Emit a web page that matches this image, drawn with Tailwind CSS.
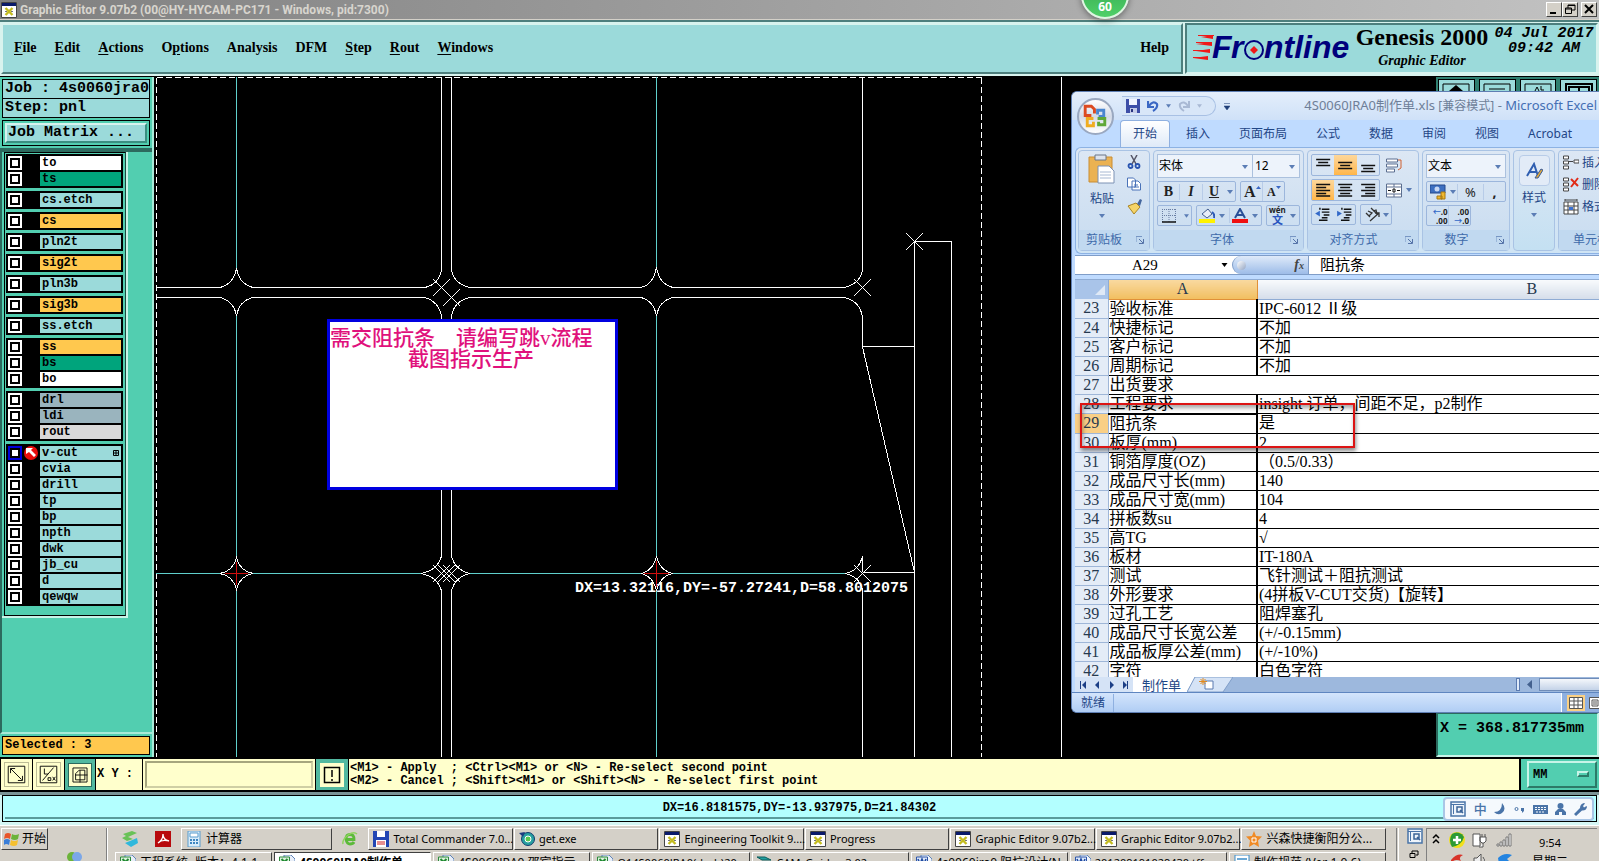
<!DOCTYPE html>
<html lang="zh-CN">

<head>
    <meta charset="UTF-8">
    <meta name="viewport" content="width=device-width, initial-scale=1.0">
    <script src="https://cdn.jsdelivr.net/npm/@tailwindcss/browser@4"></script>
    <title>Graphic Editor 9.07b2</title>
</head>

<body class="h-screen flex flex-col overflow-hidden bg-black text-black font-[family-name:'Noto_Sans','Noto_Sans_CJK_SC',sans-serif]">

    <!-- shared icons -->
    <svg class="hidden">
        <symbol id="xwin" viewBox="0 0 16 16">
            <path d="M.5 .5h15v15H.5z" fill="#fff" stroke="#444" />
            <path d="M1 1h14v3H1z" fill="#0a1a6a" />
            <path d="M4.500 6l7 7M11.500 6l-7 7" stroke="#c4bc20" stroke-width="2.400" />
            <path d="M4 9.500h2M10 9.500h2" stroke="#777" />
        </symbol>
        <symbol id="down" viewBox="0 0 6 4">
            <path d="M0 0h6L3 4z" fill="currentColor" />
        </symbol>
        <symbol id="launch" viewBox="0 0 8 8">
            <path d="M0 6V.5h6" fill="none" stroke="#7796c4" />
            <path d="M3 3l4 4M7.500 3v4.500H3" fill="none" stroke="#5573a8" />
        </symbol>
        <symbol id="xls" viewBox="0 0 16 16">
            <path d="M5 0h7l4 4v12H5z" fill="#e8eef8" stroke="#5f84b8" />
            <path d="M.5 2h10v10H.5z" fill="#dff3df" stroke="#2d8a3c" />
            <path d="M2.500 4l6 6M8.500 4l-6 6" stroke="#218a32" stroke-width="2" />
        </symbol>
        <symbol id="doc" viewBox="0 0 16 16">
            <path d="M5 0h7l4 4v12H5z" fill="#f2f6fd" stroke="#5f84b8" />
            <path d="M.5 2h11v9H.5z" fill="#dce8fa" stroke="#2d55a8" />
            <path d="M2 4l2 5 2-5 2 5 2-5" fill="none" stroke="#1f4aa0" stroke-width="1.500" />
        </symbol>
        <symbol id="ime" viewBox="0 0 16 16">
            <path d="M1 1h14v14H1z" fill="#eef4fb" stroke="#4a74a8" stroke-width="1.500" />
            <path d="M3.500 3v10M1 3.500h13" fill="none" stroke="#4a74a8" />
            <path d="M7 6h5v5H7zM10 9l3 3" fill="none" stroke="#3c6498" stroke-width="1.500" />
        </symbol>
    </svg>

    <!-- title bar -->
    <div class="h-5 shrink-0 flex items-center px-[1px] bg-linear-to-r from-[#808080] to-[#c2c2c2] border-b border-[#d4d0c8]">
        <svg class="size-4"><use href="#xwin" /></svg>
        <h1 class="ml-[3px] flex-1 text-[12px] leading-4 font-bold text-[#d8d5ce] whitespace-nowrap font-[family-name:Roboto,sans-serif]">Graphic Editor 9.07b2 (00@HY-HYCAM-PC171 - Windows, pid:7300)</h1>
        <div class="flex h-[15px] pr-[1px]">
            <button aria-label="最小化" class="w-4 bg-[#d4d0c8] border border-t-white border-l-white border-r-[#404040] border-b-[#404040]"><svg viewBox="0 0 14 13"><path d="M3 10h6" stroke="#000" stroke-width="2" /></svg></button>
            <button aria-label="还原" class="w-4 bg-[#d4d0c8] border border-t-white border-l-white border-r-[#404040] border-b-[#404040]"><svg viewBox="0 0 14 13" fill="none" stroke="#000"><path d="M5 5V2h7v5H9M5 2.500h7M2.500 5h6v5.500h-6zM2.500 6h6" /></svg></button>
            <button aria-label="关闭" class="ml-[3px] w-4 bg-[#d4d0c8] border border-t-white border-l-white border-r-[#404040] border-b-[#404040]"><svg viewBox="0 0 14 13"><path d="M3 2l8 8M11 2l-8 8" stroke="#000" stroke-width="2" /></svg></button>
        </div>
    </div>

    <!-- menu and product logo -->
    <header class="h-[57px] shrink-0 flex bg-[#d8f3ee] border-t-2 border-b border-t-[#4d7f7d] border-b-black font-[family-name:'Liberation_Serif',serif] font-bold">
        <nav class="flex-1 m-px mb-[2px] flex items-center gap-[18px] pl-[11px] pr-[12px] pb-[2px] bg-[#9bdada] border-2 border-t-[#d8f3ee] border-l-[#d8f3ee] border-r-[#4d7f7d] border-b-[#4d7f7d] text-[14px]">
            <button class="leading-4"><u class="underline-offset-2">F</u>ile</button>
            <button class="leading-4"><u class="underline-offset-2">E</u>dit</button>
            <button class="leading-4"><u class="underline-offset-2">A</u>ctions</button>
            <button class="leading-4">O<u class="underline-offset-2">p</u>tions</button>
            <button class="leading-4">Analysis</button>
            <button class="leading-4">DFM</button>
            <button class="leading-4"><u class="underline-offset-2">S</u>tep</button>
            <button class="leading-4"><u class="underline-offset-2">R</u>out</button>
            <button class="leading-4"><u class="underline-offset-2">W</u>indows</button>
            <button class="leading-4 ml-auto">Help</button>
        </nav>
        <div class="w-[413px] m-px mb-[2px] flex bg-[#9bdada] border-2 border-t-[#4d7f7d] border-l-[#4d7f7d] border-r-[#d8f3ee] border-b-[#d8f3ee]">
            <svg class="w-[165px] h-[48px] shrink-0" viewBox="-2 1 165 48">
                <g fill="#f01818">
                    <path d="M12 13l12-2v4zM7 20l16-2v4zM7 27l14-2v4zM4 34l15-2v4z" />
                    <path d="M9 11h16v1H9zM7 18h16v1H7zM4 26h17v1H4zM4 33h14v1H4z" />
                </g>
                <g fill="#00007c" font-family="Liberation Sans, sans-serif" font-weight="700" font-style="italic" font-size="32">
                    <text x="23" y="34">F</text>
                    <text x="42" y="34">r</text>
                    <text x="75" y="34">ntline</text>
                </g>
                <circle cx="65" cy="26" r="9" fill="#9bdada" stroke="#00007c" stroke-width="2" />
                <path d="M65 22l4 4-4 4-4-4z" fill="#f01818" />
            </svg>
            <div class="flex flex-col items-center w-[140px] whitespace-nowrap">
                <span class="text-[24px] leading-6">Genesis 2000</span>
                <span class="text-[14px] leading-6 italic">Graphic Editor</span>
            </div>
            <div class="flex flex-col items-center flex-1 pt-px whitespace-pre font-[family-name:'Liberation_Mono',monospace] text-[15px] leading-[15px] italic">
                <span>04 Jul 2017</span>
                <span>09:42 AM</span>
            </div>
        </div>
    </header>

    <!-- workspace -->
    <main class="flex-1 min-h-0 flex relative border-b-2 border-black">
        <aside class="w-[154px] shrink-0 flex flex-col bg-[#52ceb0] border-r-2 border-[#a8ead8] font-[family-name:'Liberation_Mono',monospace] font-bold">
            <div class="mt-[2px] mx-[2px] border border-black bg-[#9bdada] pl-[2px] text-[15px] leading-[18px] whitespace-pre">Job : 4s0060jra0</div>
            <div class="mx-[2px] border border-t-0 border-black bg-[#9bdada] pl-[2px] text-[15px] leading-[18px] whitespace-pre">Step: pnl</div>
            <div class="mt-[2px] mx-[2px] border border-black p-[2px] flex">
                <button class="flex-1 bg-[#9bdada] border-2 border-t-[#d8f3ee] border-l-[#d8f3ee] border-r-[#3a8f80] border-b-[#3a8f80] pl-[1px] text-left text-[15px] leading-[16px]">Job Matrix ...</button>
            </div>
            <div class="mt-[2px] flex-1 border-l-2 border-t-4 border-[#2c6a5e] border-b-2 border-b-[#a8ead8]">
                <div id="layers" class="w-[126px] border-r-2 border-b-2 border-[#c8f4e8] pl-[2px]"></div>
            </div>
            <div class="my-[2px] mx-[2px] border border-black bg-[#ffc84e] pl-[2px] text-[12px] leading-[17px] whitespace-pre">Selected : 3</div>
        </aside>

        <section class="flex-1 relative overflow-hidden bg-black">
            <!-- panel drawing -->
            <svg class="block size-full" shape-rendering="crispEdges" fill="none" stroke="#fff">
                <g transform="translate(-154 -77)">
                    <path stroke-dasharray="6 3" d="M156.500 77.500H981.500M156.500 77.500V757M981.500 77.500V757" />
                    <g stroke="#5fd0cc">
                        <path d="M236.500 77V268M236.500 316V558M236.500 589V757" />
                        <path d="M656.500 77V268M656.500 316V558M656.500 589V757" />
                        <path d="M156 573.500H220M253 573.500H421M470 573.500H641M673 573.500H845" />
                    </g>
                    <path d="M156 287.500H220Q234 284 236.500 268Q239 284 253 287.500H425Q439 284 441.500 270V77" />
                    <path d="M156 297.500H220Q234 301 236.500 316Q239 301 253 297.500H425Q439 302 441.500 316V556Q438 570 421 573.500Q438 577 441.500 591V757" />
                    <path d="M451.500 77V270Q454 284 470 287.500H641Q654 284 656.500 267Q659 284 673 287.500H844Q860 284 862.500 270V77" />
                    <path d="M451.500 757V591Q455 577 470 573.500Q455 570 451.500 556V316Q454 301 470 297.500H641Q654 301 656.500 316Q659 301 673 297.500H844Q860 301 862.500 317V346.500" />
                    <path d="M220 573.500Q233 571 236.500 558Q240 571 253 573.500Q240 576 236.500 589Q233 576 220 573.500z" />
                    <path d="M641 573.500Q653 571 656.500 556Q660 571 673 573.500Q660 576 656.500 591Q653 576 641 573.500z" />
                    <path d="M862.500 572V556Q859 571 845 573.500Q859 576 862.500 590V757" />
                    <path d="M914.500 757V241.500H951.500V757M862 346.500H914.500M862.500 347L914.500 572.500M864 572.500H914.500M1061.500 77V757" />
                    <path stroke="#d01010" d="M225 573.500H248M236.500 562V585M644 573.500H669M656.500 561V587" />
                    <path d="M433 279l17 17M450 279l-17 17M443 289l17 17M460 289l-17 17M854 279l17 17M871 279l-17 17M906 233l17 17M923 233l-17 17" />
                    <path d="M433 565l17 17M450 565l-17 17M438 565l17 17M455 565l-17 17M443 565l17 17M460 565l-17 17M854 565l17 17M871 565l-17 17" />
                </g>
            </svg>
            <div class="absolute left-[421px] top-[503px] text-white font-bold text-[15px] leading-[18px] whitespace-nowrap font-[family-name:'Liberation_Mono',monospace]">DX=13.32116,DY=-57.27241,D=58.8012075</div>
            <!-- note -->
            <div class="absolute left-[173px] top-[242px] w-[291px] h-[171px] bg-white border-[3px] border-[#0000e0] pt-[6px] whitespace-pre text-[21px] leading-[21px] font-medium text-[#e0117c] font-[family-name:'Liberation_Serif','Noto_Sans_CJK_SC',serif]">需交阻抗条    请编写跳v流程
<span class="pl-[78px]">截图指示生产</span></div>
        </section>

        <aside class="w-[163px] shrink-0 flex flex-col justify-between bg-black">
            <div class="grid grid-cols-4 gap-1 h-4 pt-[2px] px-[2px] bg-[#2f7f70]">
                <button aria-label="up" class="bg-[#9bdada] border border-black flex justify-center"><svg class="w-7 h-3" viewBox="0 0 28 12"><path d="M1 12V4h26v8" fill="none" stroke="#000" /><path d="M14 5l7 6H7z" /></svg></button>
                <button aria-label="line" class="bg-[#9bdada] border border-black flex justify-center"><svg class="w-7 h-3" viewBox="0 0 28 12"><path d="M1 12V4h26v8M6 9h16" fill="none" stroke="#000" /></svg></button>
                <button aria-label="text" class="bg-[#9bdada] border border-black flex justify-center"><svg class="w-7 h-3" viewBox="0 0 28 12"><path d="M1 12V4h26v8M11 11l2-4 2 4M17 6v4h3" fill="none" stroke="#000" /></svg></button>
                <button aria-label="table" class="bg-[#9bdada] border border-black flex justify-center"><svg class="w-7 h-3" viewBox="0 0 28 12"><path d="M1 12V4h26v8M4 12V7h20v5M14 7v5" fill="none" stroke="#000" stroke-width="2" /></svg></button>
            </div>
            <div class="h-[45px] bg-[#52ceb0] border-2 border-t-[#2c6a5e] border-l-[#2c6a5e] border-r-[#c8f4e8] border-b-[#c8f4e8] pl-[2px] pt-[6px] text-[15px] leading-[18px] font-bold whitespace-pre font-[family-name:'Liberation_Mono',monospace]">X = 368.817735mm</div>
        </aside>
    </main>

    <!-- coordinate entry and messages -->
    <form class="h-[33px] shrink-0 flex gap-px bg-black border-b-2 border-black font-bold font-[family-name:'Liberation_Mono',monospace] text-[12px]">
        <button type="button" aria-label="snap" class="ml-px w-[31px] bg-[#ffffcc] p-[3px]"><svg class="size-[25px] border border-[#bdbd96]" viewBox="0 0 25 25" fill="none" stroke="#000"><path d="M3.500 3.500h18v18h-18zM6 6l12 12M6 11V6h5M19 14v5h-5" /></svg></button>
        <button type="button" aria-label="angle" class="w-[31px] bg-[#ffffcc] p-[3px]"><svg class="size-[25px] border border-[#bdbd96]" viewBox="0 0 25 25" fill="none" stroke="#000"><path d="M3.500 3.500h18v18h-18zM6 19L18 5M8 6v6h4M12 16h3v3h-3zM17 15l3 4M20 15l-3 4" /></svg></button>
        <button type="button" aria-label="grid" class="w-[30px] bg-[#52b8a0] p-[3px]"><svg class="size-6 bg-[#ffffcc] border border-[#2c6a5e]" viewBox="0 0 25 25" fill="none" stroke="#000"><path d="M4.500 4.500h16v16h-16zM12.500 7v14M7 12.500h14M7.500 18V11l4-4H18V18z" /></svg></button>
        <label for="xy" class="w-[46px] bg-[#ffffcc] pl-[1px] leading-[31px] whitespace-pre">X Y :</label>
        <div class="w-[172px] bg-[#ffffcc] p-[2px] flex">
            <input id="xy" type="text" class="flex-1 min-w-0 bg-[#ffffcc] border-2 border-t-[#a6a67e] border-l-[#a6a67e] border-r-[#cfcfa4] border-b-[#cfcfa4] px-1">
        </div>
        <button type="button" aria-label="alert" class="w-[32px] bg-[#52b8a0] p-[4px]"><svg class="size-6 bg-[#ffffcc]" viewBox="0 0 24 24" fill="none" stroke="#000"><path d="M4.500 4.500h15v15h-15zM12 7v7M12 16v2" stroke-width="1.500" /></svg></button>
        <div class="flex-1 bg-[#ffffcc] pl-[1px] pt-[3px] leading-[13px] whitespace-pre">&lt;M1&gt; - Apply  ; &lt;Ctrl&gt;&lt;M1&gt; or &lt;N&gt; - Re-select second point
&lt;M2&gt; - Cancel ; &lt;Shift&gt;&lt;M1&gt; or &lt;Shift&gt;&lt;N&gt; - Re-select first point</div>
        <div class="w-[78px] ml-px bg-[#52ceb0] pl-[6px] pr-[2px] py-[2px]">
            <div class="relative h-full">
                <select aria-label="单位" class="appearance-none size-full pl-[4px] border-2 border-t-[#c8f4e8] border-l-[#c8f4e8] border-r-[#2c7a68] border-b-[#2c7a68] font-bold">
                    <option>MM</option>
                </select>
                <span class="absolute right-2 top-[10px] w-3 h-[6px] border-2 border-t-[#c8f4e8] border-l-[#c8f4e8] border-r-[#2c7a68] border-b-[#2c7a68]"></span>
            </div>
        </div>
    </form>

    <div class="h-[33px] shrink-0 bg-[#d4f6f4] border-t-3 border-[#7b9496] px-[2px] pb-[3px]">
        <div class="h-full border border-black bg-[#b3ffff] p-[2px]">
            <div class="h-full border-b-2 border-[#5a9c9c] text-center font-bold text-[12px] leading-[20px] font-[family-name:'Liberation_Mono',monospace]">DX=16.8181575,DY=-13.937975,D=21.84302</div>
        </div>
    </div>

    <!-- taskbar -->
    <footer class="h-[36px] shrink-0 flex bg-[#d4d0c8] border-t border-white pt-[2px] text-[12px] overflow-hidden">
        <div class="w-[106px] shrink-0 pl-px">
            <button class="flex items-center gap-[2px] w-[47px] h-[22px] pl-[2px] border border-t-white border-l-white border-r-[#404040] border-b-[#404040] whitespace-nowrap">
                <svg class="size-4 shrink-0" viewBox="0 0 16 16"><path d="M1 3q3-2 6 0L6 8Q3 6 0 8z" fill="#e8552a" /><path d="M8 3q3 2 7 0l-1 5q-3 2-7 0z" fill="#6cb33a" /><path d="M0 9q3-2 6 0l-1 5q-3-2-5 0z" fill="#3a7ed8" /><path d="M7 9q3 2 7 0l-1 5q-3 2-7 0z" fill="#f5c030" /></svg>开始
            </button>
            <svg class="ml-[65px] mt-[1px] w-4 h-3" viewBox="0 0 16 12"><circle cx="6" cy="6" r="5" fill="#6cb33a" /><circle cx="11" cy="6" r="5" fill="#7ba7e8" /></svg>
        </div>
        <div class="w-[2px] border-l border-r border-l-[#808080] border-r-white"></div>
        <div class="flex-1 min-w-0 flex flex-col gap-[2px]">
            <div id="tasks1" class="flex h-[22px] items-center pl-[14px]">
                <svg class="size-4 mr-[17px]" viewBox="0 0 16 16"><path d="M1 3l9-3 5 2-9 4 5 2-6 2-5-3 4-2z" fill="#69c257" /><path d="M15 7l-7 3-5 2 6 4 7-4z" fill="#2fb8dc" /></svg>
                <svg class="size-4 mr-[10px]" viewBox="0 0 16 16"><path d="M0 0h16v16H0z" fill="#b8090c" /><path d="M3 12Q8 9 8 3Q8 9 14 10Q7 8 3 12z" fill="none" stroke="#fff" stroke-width="1.300" /></svg>
            </div>
            <div id="tasks2" class="flex h-[22px] pl-[7px]"></div>
        </div>
        <div class="w-[3px] border-l border-r border-l-[#808080] border-r-white"></div>
        <div class="w-[27px] shrink-0 pl-2">
            <svg class="size-4"><use href="#ime" /></svg>
            <svg class="ml-[2px] mt-[6px] size-[10px]" viewBox="0 0 10 10" fill="none" stroke="#000"><path d="M3 3V1h6v4H7M1 3.500h5v4H1z" /></svg>
        </div>
        <div class="w-[171px] shrink-0 flex border-l border-t border-[#808080] pl-[5px] pt-[3px] mr-[2px]">
            <svg class="w-[94px] h-9" viewBox="0 0 94 36">
                <path d="M1 6l3-3 3 3M1 11l3-3 3 3" fill="none" stroke="#000" stroke-width="1.500" />
                <circle cx="25" cy="8" r="8" fill="#f2e01c" />
                <path d="M20 2a8 8 0 0 1 12 3q-2 8-12 10Q16 8 20 2z" fill="#2c9a35" />
                <path d="M25 4v8M21 8h8" stroke="#fff" stroke-width="2.500" />
                <path d="M41 2h7v12h-7zM48 5h6v4l-2 2h-2l-2-2zM50 2v3M53 2v3M51 11v4h-4" fill="#fff" stroke="#555" />
                <path d="M65 14v-2h2v2zM68 14v-4h2v4zM71 14V8h2v6zM74 14V5h2v9zM77 14V2h2v12z" fill="#fff" stroke="#777" />
                <path d="M19 28q6-7 12-5-5 2-2 6-6-3-10 2z" fill="#d8342a" />
                <path d="M42 26h3l4-4v12l-4-4h-3zM51 25q3 3 0 6" fill="#eee" stroke="#555" />
                <path d="M66 26q6-6 14-3l-5 4 4 4-12 1z" fill="#2484e0" />
            </svg>
            <div class="flex flex-col items-center pl-[6px] whitespace-nowrap">
                <span class="text-[11px] leading-[22px]">9:54</span>
                <span class="leading-4">星期二</span>
            </div>
        </div>
    </footer>

    <!-- Excel -->
    <section class="absolute left-[1071px] right-0 top-[91px] h-[622px] overflow-hidden rounded-l-md border border-r-0 border-[#5f7fb4] bg-[#bfdbff] text-[12px] text-[#1f4686] whitespace-nowrap">
        <div class="h-[28px] flex items-center pl-[50px] bg-linear-to-b from-[#e4eefb] to-[#cfe1f8]">
            <div class="flex items-center gap-[7px] h-5 pl-[4px] rounded-r-full border border-[#a8c0e4] border-l-0 bg-[#d8e6f8] w-[94px]">
                <svg class="size-[14px] shrink-0" viewBox="0 0 14 14"><path d="M0 0h14v14H0z" fill="#3d4ea8" /><path d="M3 0h8v6H3z" fill="#f2f5ff" /><path d="M4 9h7v5H4z" fill="#c4cbe8" /><path d="M5 10h2v3H5z" fill="#27337e" /></svg>
                <svg class="w-3 h-3 shrink-0" viewBox="0 0 12 12"><path d="M1 1v6h6M2 6Q6 0 10 4Q11 8 6 11" fill="none" stroke="#3a67c4" stroke-width="2.200" /></svg>
                <svg class="w-[5px] h-1 shrink-0 text-[#5b7db5]"><use href="#down" /></svg>
                <svg class="w-3 h-3 shrink-0" viewBox="0 0 12 12"><path d="M11 1v6H5M10 6Q6 0 2 4Q1 8 6 11" fill="none" stroke="#a9b9d4" stroke-width="2" /></svg>
                <svg class="w-[5px] h-1 shrink-0 text-[#a9b9d4]"><use href="#down" /></svg>
            </div>
            <svg class="ml-2 w-[6px] h-[7px]" viewBox="0 0 6 7"><path d="M0 .5h6M0 3h6L3 7z" fill="#1f3f78" stroke="#1f3f78" stroke-width=".5" /></svg>
            <h2 class="ml-auto pr-[2px] text-[13px] text-[#6f7f98]">4S0060JRA0制作单.xls <span class="text-[12px]">[兼容模式]</span> - <span class="text-[#456fb4]">Microsoft Excel</span></h2>
        </div>
        <div class="h-[27px] flex items-center gap-[29px] pl-[48px] leading-[26px]">
            <button class="h-full -mr-[13px] px-[12px] rounded-t-sm border border-b-0 border-[#8fb0e0] bg-linear-to-b from-white to-[#dfeaf8]">开始</button>
            <button>插入</button>
            <button>页面布局</button>
            <button>公式</button>
            <button>数据</button>
            <button>审阅</button>
            <button>视图</button>
            <button>Acrobat</button>
        </div>
        <!-- office button -->
        <button aria-label="Office" class="absolute left-[5px] top-[6px] size-[37px] rounded-full border-2 border-[#9aa8c0] bg-linear-to-b from-white via-[#d4dbe8] to-white">
            <svg class="size-full" viewBox="0 0 32 32" fill="none" stroke-width="2.800"><path d="M15 13V9l-3-3H6v9h6" stroke="#dc4a20" /><path d="M18 14v-4h6v6h-5" stroke="#4a86d0" /><path d="M14 18H8v7h6v-4" stroke="#f0ac20" /><path d="M18 18h7v6h-6v-3" stroke="#5fa838" /></svg>
        </button>

        <!-- ribbon -->
        <div class="ml-[3px] h-[107px] flex gap-[3px] p-[2px] border border-r-0 border-[#8db2e3] rounded-l-md bg-linear-to-b from-[#dbe6f4] to-[#cfe4f4]">
            <div class="w-[72px] shrink-0 flex flex-col rounded-sm border border-[#a9c3e4] bg-linear-to-b from-[#dce7f4] to-[#c8dcf0]">
                <div class="flex-1 flex justify-between pl-[9px] pr-[7px] pt-[3px]">
                    <button class="flex flex-col items-center">
                        <svg class="w-7 h-[30px]" viewBox="0 0 28 30"><path d="M1 3h23v25H1z" fill="#ebb252" stroke="#c98d33" /><path d="M7 1h11v5H7z" fill="#dde3ec" stroke="#6a7688" /><path d="M10 12h11l5 5v12H10z" fill="#fff" stroke="#7d92b4" /><path d="M12 18h11M12 21h11M12 24h11" stroke="#a7b8d2" /></svg>
                        <span class="mt-[5px] leading-5">粘贴</span>
                        <svg class="mt-[5px] w-[6px] h-1 text-[#5b7db5]"><use href="#down" /></svg>
                    </button>
                    <div class="flex flex-col gap-2 pt-[1px]">
                        <button aria-label="剪切"><svg class="size-[14px]" viewBox="0 0 14 14" fill="none"><path d="M4 0l5 9M10 0L5 9" stroke="#556" stroke-width="1.500" /><circle cx="3.500" cy="11" r="2" stroke="#2a55b0" stroke-width="1.800" /><circle cx="10.500" cy="11" r="2" stroke="#2a55b0" stroke-width="1.800" /></svg></button>
                        <button aria-label="复制"><svg class="size-[14px]" viewBox="0 0 14 14" fill="#fff" stroke="#4a73b8"><path d="M.5 1h6l2 2v7h-8zM5 4h6l2.500 2.500V13H5zM7 8h4M7 10h5" /></svg></button>
                        <button aria-label="格式刷"><svg class="size-[15px]" viewBox="0 0 15 15"><path d="M10 5l3-5 2 1-2 6z" fill="#44669e" /><path d="M1 7l8-3 4 4-6 7z" fill="#f5d468" stroke="#a98424" /></svg></button>
                    </div>
                </div>
                <div class="h-5 flex items-center justify-between pl-[7px] pr-[5px] bg-[#c1d9f0] text-[#3e6aaa]"><span>剪贴板</span><svg class="size-2"><use href="#launch" /></svg></div>
            </div>

            <div class="w-[151px] shrink-0 flex flex-col rounded-sm border border-[#a9c3e4] bg-linear-to-b from-[#dce7f4] to-[#c8dcf0]">
                <div class="flex-1 flex flex-col gap-[3px] px-[3px] pt-[3px]">
                    <div class="flex h-6 text-black">
                        <div class="relative w-[96px] border border-[#abc1de] bg-[#edf3fb]">
                            <select aria-label="字体" class="appearance-none size-full pl-[1px]"><option>宋体</option></select>
                            <svg class="absolute right-1 top-[10px] w-[6px] h-1 text-[#5b7db5] pointer-events-none"><use href="#down" /></svg>
                        </div>
                        <div class="relative flex-1 border border-l-0 border-[#abc1de] bg-[#edf3fb]">
                            <select aria-label="字号" class="appearance-none size-full pl-[2px]"><option>12</option></select>
                            <svg class="absolute right-1 top-[10px] w-[6px] h-1 text-[#5b7db5] pointer-events-none"><use href="#down" /></svg>
                        </div>
                    </div>
                    <div class="flex gap-1 h-[21px] text-[#222] font-bold font-[family-name:'Liberation_Serif',serif]">
                        <div class="flex items-center w-[79px] border border-[#9cb6dc] rounded-xs">
                            <button class="w-[22px] text-[14px] leading-4 border-r border-[#b8cce8]">B</button>
                            <button class="w-[23px] text-[14px] leading-4 italic border-r border-[#b8cce8]">I</button>
                            <button class="w-[22px] text-[14px] leading-4 underline">U</button>
                            <svg class="ml-[2px] w-[6px] h-1 text-[#5b7db5]"><use href="#down" /></svg>
                        </div>
                        <div class="flex items-center w-[45px] border border-[#9cb6dc] rounded-xs">
                            <button aria-label="增大字号" class="flex items-center w-[22px] h-full pl-[3px] text-[16px] leading-4 border-r border-[#b8cce8]">A<svg class="w-[5px] h-3 text-[#3a67c4]" viewBox="0 0 5 12"><path d="M0 3h5L2.500 0z" fill="currentColor" /></svg></button>
                            <button aria-label="减小字号" class="flex items-center w-[21px] h-full pl-1 text-[12px] leading-4">A<svg class="w-[5px] h-3 text-[#3a67c4]" viewBox="0 0 5 12"><path d="M0 0h5L2.500 3z" fill="currentColor" /></svg></button>
                        </div>
                    </div>
                    <div class="flex gap-1 h-[21px]">
                        <button aria-label="边框" class="flex items-center gap-2 w-[35px] pl-1 border border-[#9cb6dc] rounded-xs"><svg class="size-[14px]" viewBox="0 0 14 14" fill="none" stroke="#6a7fa4"><path d="M.5 0v13M7 0v13M13.500 0v13M0 .5h14M0 6.500h14" stroke-dasharray="1 1" /><path d="M0 13h14" stroke="#111" stroke-width="1.500" /></svg><svg class="w-[5px] h-1 text-[#5b7db5]"><use href="#down" /></svg></button>
                        <div class="flex items-center w-[66px] border border-[#9cb6dc] rounded-xs">
                            <button aria-label="填充颜色" class="flex items-center gap-1 pl-[2px] w-[33px] border-r border-[#b8cce8]"><svg class="w-4 h-[15px]" viewBox="0 0 16 15"><path d="M3 6l6-5 4 5-5 4z" fill="#e8eef8" stroke="#445e90" /><path d="M13 4q3 2 2 6" fill="none" stroke="#2f5cb8" stroke-width="2" /><path d="M0 11h16v4H0z" fill="#fff200" /></svg><svg class="w-[6px] h-1 text-[#5b7db5]"><use href="#down" /></svg></button>
                            <button aria-label="字体颜色" class="flex items-center gap-1 pl-[2px]"><svg class="w-4 h-[15px]" viewBox="0 0 16 15"><path d="M3 10L8 1l5 9M5 7h6" fill="none" stroke="#2a4f98" stroke-width="2" /><path d="M0 11h16v4H0z" fill="#f01010" /></svg><svg class="w-[6px] h-1 text-[#5b7db5]"><use href="#down" /></svg></button>
                        </div>
                        <button class="flex items-center gap-1 flex-1 pl-[2px] border border-[#9cb6dc] rounded-xs"><span class="flex flex-col items-center text-[8px] leading-[8px] font-bold text-[#222]">wén<span class="text-[11px] leading-[11px] text-[#2a55c0]">文</span></span><svg class="w-[6px] h-1 text-[#5b7db5]"><use href="#down" /></svg></button>
                    </div>
                </div>
                <div class="h-5 flex items-center bg-[#c1d9f0] pr-[13px] text-[#3e6aaa]"><span class="flex-1 text-center">字体</span><svg class="size-2 -mr-2"><use href="#launch" /></svg></div>
            </div>

            <div class="w-[112px] shrink-0 flex flex-col rounded-sm border border-[#a9c3e4] bg-linear-to-b from-[#dce7f4] to-[#c8dcf0]">
                <div class="flex-1 flex flex-col gap-[3px] px-[3px] pt-[3px]">
                    <div class="flex items-center gap-[6px] h-[22px]">
                        <div class="flex h-full w-[69px] border border-[#9cb6dc] rounded-xs">
                            <button aria-label="顶端对齐" class="flex-1"><svg class="size-full" viewBox="0 0 22 20"><path d="M4 4.500h14M6 7.500h10M4 10.500h14" stroke="#111" stroke-width="1.500" /></svg></button>
                            <button aria-label="垂直居中" class="flex-1 bg-linear-to-b from-[#fdd79a] to-[#ffb648]"><svg class="size-full" viewBox="0 0 22 20"><path d="M4 7.500h14M6 10.500h10M4 13.500h14" stroke="#111" stroke-width="1.500" /></svg></button>
                            <button aria-label="底端对齐" class="flex-1"><svg class="size-full" viewBox="0 0 22 20"><path d="M4 10.500h14M6 13.500h10M4 16.500h14" stroke="#111" stroke-width="1.500" /></svg></button>
                        </div>
                        <button aria-label="自动换行"><svg class="w-4 h-[15px]" viewBox="0 0 16 15" fill="#fff" stroke="#5c6f90"><path d="M.5 1h11v3H.5zM.5 6h11v3H.5zM.5 11h8v3h-8z" /><path d="M12 2h3v8l-3 2" fill="none" stroke="#d06030" /></svg></button>
                    </div>
                    <div class="flex items-center gap-[6px] h-[22px]">
                        <div class="flex h-full w-[69px] border border-[#9cb6dc] rounded-xs">
                            <button aria-label="左对齐" class="flex-1 bg-linear-to-b from-[#fdd79a] to-[#ffb648]"><svg class="size-full" viewBox="0 0 22 20"><path d="M4 4.500h14M4 7.500h10M4 10.500h14M4 13.500h10M4 16h14" stroke="#111" stroke-width="1.500" /></svg></button>
                            <button aria-label="居中" class="flex-1"><svg class="size-full" viewBox="0 0 22 20"><path d="M4 4.500h14M6 7.500h10M4 10.500h14M6 13.500h10M4 16h14" stroke="#111" stroke-width="1.500" /></svg></button>
                            <button aria-label="右对齐" class="flex-1"><svg class="size-full" viewBox="0 0 22 20"><path d="M4 4.500h14M8 7.500h10M4 10.500h14M8 13.500h10M4 16h14" stroke="#111" stroke-width="1.500" /></svg></button>
                        </div>
                        <button aria-label="合并" class="flex items-center gap-1"><svg class="w-4 h-[15px]" viewBox="0 0 16 15" fill="#fff" stroke="#5c6f90"><path d="M.5 1h15v13H.5zM8 1v3M8 11v3M.5 4h15M.5 11h15" /><path d="M2 7.500h3M14 7.500h-3M7 6h2v3H7z" stroke="#111" /></svg><svg class="w-[6px] h-1 text-[#5b7db5]"><use href="#down" /></svg></button>
                    </div>
                    <div class="flex items-center gap-1 h-[21px]">
                        <div class="flex h-full w-[45px] border border-[#9cb6dc] rounded-xs">
                            <button aria-label="减少缩进" class="flex-1"><svg class="size-full" viewBox="0 0 22 20"><path d="M10 4.500h8M10 7.500h8M12 10.500h6M10 13.500h6M7 16h9M8 3v2" stroke="#111" stroke-width="1.500" /><path d="M8 6v6L3 9z" fill="#3268c8" /></svg></button>
                            <button aria-label="增加缩进" class="flex-1"><svg class="size-full" viewBox="0 0 22 20"><path d="M10 4.500h8M10 7.500h8M12 10.500h6M10 13.500h6M7 16h9M8 3v2" stroke="#111" stroke-width="1.500" /><path d="M3 6v6l5-3z" fill="#3268c8" /></svg></button>
                        </div>
                        <button aria-label="方向" class="flex items-center gap-[3px] h-full w-8 pl-1 border border-[#9cb6dc] rounded-xs"><svg class="size-[15px]" viewBox="0 0 15 15" fill="none" stroke="#333"><path d="M1 6l4 4M3 4l4 2-3 3M6 1l6 6M8 4l3-1 1 4M5 14l9-8M14 10V6h-4" stroke-width="1.300" /></svg><svg class="w-[6px] h-1 text-[#5b7db5]"><use href="#down" /></svg></button>
                    </div>
                </div>
                <div class="h-5 flex items-center bg-[#c1d9f0] pr-[13px] text-[#3e6aaa]"><span class="flex-1 pr-[6px] text-center">对齐方式</span><svg class="size-2 -mr-2"><use href="#launch" /></svg></div>
            </div>

            <div class="w-[88px] shrink-0 flex flex-col rounded-sm border border-[#a9c3e4] bg-linear-to-b from-[#dce7f4] to-[#c8dcf0]">
                <div class="flex-1 flex flex-col gap-[3px] px-[3px] pt-[3px]">
                    <div class="relative h-6 border border-[#abc1de] bg-[#edf3fb] text-black">
                        <select aria-label="数字格式" class="appearance-none size-full pl-[1px]"><option>文本</option></select>
                        <svg class="absolute right-1 top-[10px] w-[6px] h-1 text-[#5b7db5] pointer-events-none"><use href="#down" /></svg>
                    </div>
                    <div class="flex items-center h-[21px] border border-[#9cb6dc] rounded-xs text-[#222]">
                        <button aria-label="货币" class="flex items-center gap-1 pl-[3px] w-[30px]"><svg class="w-4 h-4" viewBox="0 0 16 16"><path d="M0 1h15v8H0z" fill="#3d6fc0" stroke="#24488c" /><circle cx="7" cy="5" r="2.500" fill="#c8d8f4" /><path d="M7 12h5v3H7zM11 8h4v7h-4z" fill="#f0b830" stroke="#a87810" /></svg><svg class="w-[6px] h-1 text-[#5b7db5]"><use href="#down" /></svg></button>
                        <button class="w-[27px] border-x border-[#b8cce8] text-[13px] leading-4">%</button>
                        <button class="flex-1 font-bold text-[14px] leading-4">,</button>
                    </div>
                    <div class="flex w-[45px] h-[21px] pr-px border border-[#9cb6dc] rounded-xs text-[8px] leading-[9px] font-bold text-[#222]">
                        <button class="flex-1 border-r border-[#b8cce8] text-right"><span class="text-[#3268c8]">←</span>.0<br>.00</button>
                        <button class="flex-1 text-right">.00<br><span class="text-[#3268c8]">→</span>.0</button>
                    </div>
                </div>
                <div class="h-5 flex items-center bg-[#c1d9f0] pr-[13px] text-[#3e6aaa]"><span class="flex-1 pr-[6px] text-center">数字</span><svg class="size-2 -mr-2"><use href="#launch" /></svg></div>
            </div>

            <button class="w-[42px] shrink-0 flex flex-col items-center pt-1 rounded-sm border border-[#a9c3e4] bg-linear-to-b from-[#dce7f4] to-[#c4e0f2]">
                <span class="flex justify-center items-center w-[31px] h-[31px] rounded-sm border border-[#b8cce8] bg-[#e2ebf7]"><svg class="size-[18px]" viewBox="0 0 18 18"><path d="M2 14L9 2l4 12M5 10h7" fill="none" stroke="#2f5eb0" stroke-width="2" /><path d="M10 16l6-9 2 1-5 8z" fill="#e0a838" stroke="#3a5a98" /></svg></span>
                <span class="mt-[2px] leading-5">样式</span>
                <svg class="mt-[5px] w-[6px] h-1 text-[#5b7db5]"><use href="#down" /></svg>
            </button>

            <div class="w-[90px] shrink-0 flex flex-col rounded-sm border border-[#a9c3e4] bg-linear-to-b from-[#dce7f4] to-[#c8dcf0]">
                <div class="flex-1 flex flex-col pl-[4px] pt-[1px]">
                    <button class="flex items-center gap-[3px] h-[22px]"><svg class="size-4" viewBox="0 0 16 16" fill="#fff" stroke="#444"><path d="M.5 1h5v3h-5zM.5 6h5v3h-5zM.5 11h5v3h-5zM11 5h5v3h-5zM6 6.500h4" /></svg>插入</button>
                    <button class="flex items-center gap-[3px] h-[22px]"><svg class="size-4" viewBox="0 0 16 16" fill="#fff" stroke="#444"><path d="M.5 1h5v3h-5zM.5 6h5v3h-5zM.5 11h5v3h-5z" /><path d="M8 2l7 7M15 1l-7 9" stroke="#e02c18" stroke-width="2" /></svg>删除</button>
                    <button class="flex items-center gap-[3px] h-[22px]"><svg class="size-4" viewBox="0 0 16 16" fill="#fff" stroke="#444"><path d="M1 3h14v12H1zM1 7h14M1 11h14M5 3v12M11 3v12M2 0v2M14 0v2M2 1h12" /><path d="M6 8h4v3H6z" fill="#3a70d0" stroke="none" /></svg>格式</button>
                </div>
                <div class="h-5 flex items-center pl-[14px] bg-[#c1d9f0] text-[#3e6aaa]">单元格</div>
            </div>
        </div>

        <!-- formula bar -->
        <div class="mt-px ml-[3px] h-[20px] flex border-y border-[#7f9dc8] bg-white text-black text-[15px] leading-[18px] font-[family-name:'Liberation_Serif','Noto_Sans_CJK_SC',serif]">
            <div class="w-[157px] flex items-center justify-between pl-[57px] pr-1">A29<svg class="w-[7px] h-1"><use href="#down" /></svg></div>
            <div class="w-[77px] flex items-center justify-between px-1 rounded-l-full border-x border-[#7f9dc8] bg-linear-to-b from-[#dfeaf9] to-[#9dbce8]"><span class="size-[9px] rounded-full bg-linear-to-br from-white to-[#94a5c2]"></span><i class="text-[14px] text-[#444] font-bold">f<span class="text-[10px]">x</span></i></div>
            <input aria-label="编辑栏" class="flex-1 min-w-0 pl-[11px] outline-none" value="阻抗条">
        </div>

        <!-- sheet -->
        <div class="mt-[4px] ml-[3px] h-[398px] overflow-hidden bg-white border-t border-[#8facd4]">
            <table class="w-[731px] table-fixed border-collapse text-[16px] text-black font-[family-name:'Liberation_Serif','Noto_Sans_CJK_SC',serif]">
                <thead>
                    <tr class="h-[19px] leading-[18px] text-[#26394f]">
                        <th class="w-[33px] p-0 bg-[#a9c4e9] border-r border-[#8facd4]"><svg class="ml-auto mr-[3px] size-[10px]" viewBox="0 0 10 10"><path d="M10 0v10H0z" fill="#dfe9f6" /></svg></th>
                        <th class="w-[149px] p-0 font-normal bg-linear-to-b from-[#f9d99f] to-[#f1bf5f] border-r border-b border-[#e09038]">A</th>
                        <th class="p-0 font-normal bg-linear-to-b from-[#f8fafc] to-[#d5deea] border-b border-[#8facd4]">B</th>
                    </tr>
                </thead>
                <tbody id="cells"></tbody>
            </table>
        </div>
        <div class="ml-[3px] h-[15px] flex bg-[#9db8dd]">
            <div class="w-[58px] flex items-center justify-around bg-[#d5e3f6] text-[#1c3f86]">
                <svg class="w-[50px] h-2" viewBox="0 0 50 8" fill="currentColor"><path d="M1 0h1v8H1zM7 0v8L3 4zM20 0v8l-4-4zM31 0v8l4-4zM44 0v8l4-4zM48 0h1v8h-1z" /></svg>
            </div>
            <button class="pl-[9px] pr-[6px] bg-white text-[13px] leading-[13px] font-[family-name:'Noto_Sans_CJK_SC',sans-serif]">制作单</button>
            <svg class="w-[46px] h-[15px]" viewBox="0 0 46 15"><path d="M0 0h8L0 15z" fill="#fff" /><path d="M0 15L8 0H46L36 15z" fill="#d5e3f6" stroke="#7f9dc8" /><path d="M18 4h8v8h-8z" fill="#fff" stroke="#5a7ab0" /><path d="M16 1v7M12 4.500h8M13.500 2l5 5M18.500 2l-5 5" stroke="#e08a20" /></svg>
            <div class="ml-auto flex items-center">
                <span class="w-1 h-[13px] bg-[#dfeaf9] border border-[#5a7ab0]"></span>
                <svg class="mx-[7px] w-[5px] h-[9px]" viewBox="0 0 5 9"><path d="M5 0v9L0 4.500z" fill="#44618f" /></svg>
                <span class="w-[60px] h-[13px] bg-linear-to-b from-[#f4f7fb] to-[#c4d3e8] border border-r-0 border-[#6f8cb8]"></span>
            </div>
        </div>
        <div class="h-[20px] flex items-center border-t border-[#5f86c0] bg-linear-to-b from-[#d4e5fc] to-[#b0cdf4] pl-[9px]">
            <span class="pr-2 leading-[18px] border-r border-[#8fb0e0]">就绪</span>
            <div class="ml-auto flex h-full items-center gap-1 pl-[5px] border-l border-white bg-[#8fb0e0]">
                <button aria-label="普通" class="bg-[#fbd084] p-[2px]"><svg class="w-[14px] h-3" viewBox="0 0 14 12" fill="#fff" stroke="#555"><path d="M.5 .5h13v11H.5zM5 0v12M9 0v12M0 4h14M0 8h14" /></svg></button>
                <button aria-label="页面布局"><svg class="w-[10px] h-3" viewBox="0 0 10 12" fill="#fff" stroke="#555"><path d="M.5 .5h11v11H.5zM3 3h6v6H3zM4 5h4M4 7h4" /></svg></button>
            </div>
        </div>
    </section>

    <!-- red marker -->
    <div class="absolute left-[1080px] top-[403px] w-[275px] h-[45px] border-[2px] border-[#dc1414] shadow-[1px_3px_4px_rgba(0,0,0,0.45),inset_1px_3px_4px_rgba(0,0,0,0.35)]"></div>

    <!-- counter ball -->
    <div class="absolute left-[1081px] top-[-29px] size-[48px] rounded-full border-2 border-[#dff5e2] bg-linear-to-b from-[#2fa04c] to-[#4fd068] shadow-[0_2px_6px_rgba(0,0,0,0.4)] pt-[26px] text-center text-white text-[12px] leading-4 font-bold">60</div>

    <!-- input method bar -->
    <div class="absolute right-[5px] top-[797px] w-[151px] h-[24px] rounded-sm border-2 border-[#a9c6e6] bg-[#f5f9fd] flex items-center justify-between px-[5px] text-[#4a74a8]">
        <svg class="size-4"><use href="#ime" /></svg>
        <span class="text-[13px] leading-4 font-medium">中</span>
        <svg class="size-3" viewBox="0 0 12 12"><path d="M8 0Q13 6 8 10Q4 13 0 9Q8 9 8 0z" fill="currentColor" /></svg>
        <svg class="w-[11px] h-3" viewBox="0 0 11 12"><circle cx="2.500" cy="6" r="1.500" fill="none" stroke="currentColor" /><path d="M7 5h3v3l-2 2v-2H7z" fill="currentColor" /></svg>
        <svg class="w-[15px] h-[11px]" viewBox="0 0 15 11"><path d="M0 1h15v9H0z" fill="currentColor" /><path d="M2 3.500h11M2 5.500h11M3 8h9" stroke="#f5f9fd" stroke-dasharray="2 1" /></svg>
        <svg class="w-[11px] h-3" viewBox="0 0 11 12"><circle cx="5.500" cy="3" r="3" fill="currentColor" /><path d="M0 12V9l3-3h5l3 3v3H7V9H4v3z" fill="currentColor" /></svg>
        <svg class="size-[13px]" viewBox="0 0 13 13"><path d="M0 11l6-6q0-4 4-5l1 .5L9 3l1 1.500 2.500-1.500.5 1q-1 4-5 3.500L2 13z" fill="currentColor" /></svg>
    </div>

    <script>
        // layer list, one array per boxed group
        const groups = [
            [['to', 'bg-white'], ['ts', 'bg-[#00a47c]']],
            [['cs.etch', 'bg-[#9bdada]']],
            [['cs', 'bg-[#ffc84e]']],
            [['pln2t', 'bg-[#9bdada]']],
            [['sig2t', 'bg-[#ffc84e]']],
            [['pln3b', 'bg-[#9bdada]']],
            [['sig3b', 'bg-[#ffc84e]']],
            [['ss.etch', 'bg-[#9bdada]']],
            [['ss', 'bg-[#ffc84e]'], ['bs', 'bg-[#00a47c]'], ['bo', 'bg-white']],
            [['drl', 'bg-[#9ab4be]'], ['ldi', 'bg-[#9ab4be]'], ['rout', 'bg-[#d9d9d9]']],
            ['v-cut', 'cvia', 'drill', 'tp', 'bp', 'npth', 'dwk', 'jb_cu', 'd', 'qewqw'].map(n => [n, 'bg-[#9bdada]']),
        ];
        const arrow = '<svg class="size-[14px]" viewBox="0 0 14 14"><circle cx="7" cy="7" r="7" fill="#e80c0c"/><path d="M2 2h7L7 4l5 5-2 2-5-5-3 2z" fill="#fff"/></svg>';
        const mark = '<svg class="size-[6px]" viewBox="0 0 6 6"><path d="M.5.5h5v5h-5zM3 0v6M0 3h6" fill="none" stroke="#000"/></svg>';
        let html = '';
        for (const g of groups) {
            html += '<div class="bg-black py-px px-[2px] w-[117px] mb-[3px]">';
            for (const [name, bg] of g) {
                const cur = name === 'v-cut';
                html += `<div class="flex items-center h-4">
                    <input type="checkbox" id="l-${name}" class="appearance-none size-[14px] shrink-0 border-2 ${cur ? 'border-[#0000d8]' : 'border-white'} bg-white shadow-[inset_0_0_0_2px_#000]">
                    <span class="w-[18px] shrink-0 flex justify-center">${cur ? arrow : ''}</span>
                    <label for="l-${name}" class="flex-1 h-[14px] flex items-center justify-between px-[2px] text-[12px] leading-[14px] ${bg}">${name}${cur ? mark : ''}</label>
                </div>`;
            }
            html += '</div>';
        }
        document.getElementById('layers').innerHTML = '<div class="border border-black border-r-[#1c4a40] pl-px pt-px pb-[6px]">' + html + '</div>';

        // sheet rows
        const rows = [
            ['验收标准', 'IPC-6012 Ⅱ级'], ['快捷标记', '不加'], ['客户标记', '不加'], ['周期标记', '不加'],
            ['出货要求', ''], ['工程要求', 'insight 订单，间距不足，p2制作'], ['阻抗条', '是'], ['板厚(mm)', '2'],
            ['铜箔厚度(OZ)', '（0.5/0.33）'], ['成品尺寸长(mm)', '140'], ['成品尺寸宽(mm)', '104'], ['拼板数su', '4'],
            ['高TG', '√'], ['板材', 'IT-180A'], ['测试', '飞针测试＋阻抗测试'], ['外形要求', '(4拼板V-CUT交货)【旋转】'],
            ['过孔工艺', '阻焊塞孔'], ['成品尺寸长宽公差', '(+/-0.15mm)'], ['成品板厚公差(mm)', '(+/-10%)'], ['字符', '白色字符'],
        ];
        document.getElementById('cells').innerHTML = rows.map(([a, b], i) => {
            const no = 23 + i;
            const head = no === 29 ? 'bg-[#f9cf86]' : 'bg-[#e4ecf7]';
            const cellA = no === 27 ? '' : no === 29 ? 'border-r-2 border-y-2' : 'border-r-2';
            return `<tr class="h-[19px] leading-[18px]">
                <th class="p-0 font-normal text-[#26394f] border-b border-r border-[#9eb6d8] ${head}">${no}</th>
                <td class="p-0 pl-px border-b border-black ${cellA}">${a}</td>
                <td class="p-0 pl-px border-b border-black">${b}</td>
            </tr>`;
        }).join('');

        // taskbar buttons
        const icons = {
            calc: '<svg class="size-4 shrink-0" viewBox="0 0 16 16"><path d="M2 0h12v16H2z" fill="#d8ecfa" stroke="#5a9ccc"/><path d="M4 2h8v4H4z" fill="#fff" stroke="#5a9ccc"/><path d="M4 9h8M4 12h8" stroke="#3f86c0" stroke-width="2" stroke-dasharray="2 1"/></svg>',
            disk: '<svg class="size-4 shrink-0" viewBox="0 0 16 16"><path d="M0 0h16v16H0z" fill="#2346b4"/><path d="M4 0h8v6H4zM3 9h10v7H3z" fill="#fff"/><path d="M4 11h8M4 13h8" stroke="#d02020"/></svg>',
            get: '<svg class="size-4 shrink-0" viewBox="0 0 16 16"><circle cx="9" cy="8" r="6.500" fill="#28a0a0" stroke="#123c70"/><circle cx="9" cy="8" r="3" fill="#58c850" stroke="#fff"/><path d="M0 2l6-1-2 5z" fill="#1c3c80"/></svg>',
            x: '<svg class="size-4 shrink-0"><use href="#xwin"/></svg>',
            star: '<svg class="size-4 shrink-0" viewBox="0 0 16 16"><path d="M8 0l2 5 6 .5-4 4L13 16l-5-3-5 3 1-6.500-4-4L6 5z" fill="#f08a24"/><path d="M6 7h4v4H6z" fill="none" stroke="#fff"/></svg>',
            xls: '<svg class="size-4 shrink-0"><use href="#xls"/></svg>',
            doc: '<svg class="size-4 shrink-0"><use href="#doc"/></svg>',
            cam: '<svg class="size-4 shrink-0" viewBox="0 0 16 16"><path d="M0 2h8l6 3H5zM6 7h9v4H6z" fill="#20a0a0" stroke="#0c5c5c"/></svg>',
            note: '<svg class="size-4 shrink-0" viewBox="0 0 16 16"><path d="M1 0h14v16H1z" fill="#fff" stroke="#3a8cc8"/><path d="M3 4h10M3 7h10M3 10h10" stroke="#3a8cc8" stroke-width="1.500"/></svg>',
        };
        const ie = '<svg class="size-4 shrink-0 mx-[10px]" viewBox="0 0 16 16"><path d="M4 8.500h8Q12 3.500 8 3.500T4 8.500Q5 13 8 13q3 0 4-2" fill="none" stroke="#5cba3a" stroke-width="2.800"/><path d="M1 13Q0 9 6 4Q12 0 15 3" fill="none" stroke="#8fd45e" stroke-width="1.500"/></svg>';
        const task = (icon, text, on) => {
            // latin-only captions are set one size down
            const size = /[\u4e00-\u9fff]/.test(text) ? 'text-[12px]' : 'text-[11px]';
            const edge = on ? 'bg-white font-bold border-t-[#404040] border-l-[#404040] border-r-white border-b-white' : 'border-t-white border-l-white border-r-[#404040] border-b-[#404040]';
            return `<button class="flex-1 min-w-0 h-[22px] flex items-center gap-1 pl-[4px] whitespace-nowrap border ${edge}">${icons[icon]}<span class="leading-4 ${size}">${text}</span></button>`;
        };
        document.getElementById('tasks1').innerHTML += task('calc', '计算器') + ie + '<div class="flex flex-[7] gap-px mr-[10px]">' +
            [['disk', 'Total Commander 7.0...'], ['get', 'get.exe'], ['x', 'Engineering Toolkit 9....'], ['x', 'Progress'], ['x', 'Graphic Editor 9.07b2...'], ['x', 'Graphic Editor 9.07b2...'], ['star', '兴森快捷衡阳分公...']].map(t => task(...t)).join('') + '</div>';
        document.getElementById('tasks2').innerHTML = '<div class="flex flex-1 gap-[2px] mr-[10px]">' +
            [['xls', '工程系统 -版本：4.1.1...'], ['xls', '4S0060JRA0制作单....', true], ['xls', '4S0060JRA0 邵宾指示...'], ['xls', 'Q14S0060JRA0(dxsb)20...'], ['cam', 'CAM_Guide - 3.02'], ['doc', '4s0060jra0 阻抗设计(N...'], ['doc', '201209191029430.tff...'], ['note', '制作规范 (Ver 1.0.6)']].map(t => task(...t)).join('') + '</div>';
    </script>
</body>

</html>
